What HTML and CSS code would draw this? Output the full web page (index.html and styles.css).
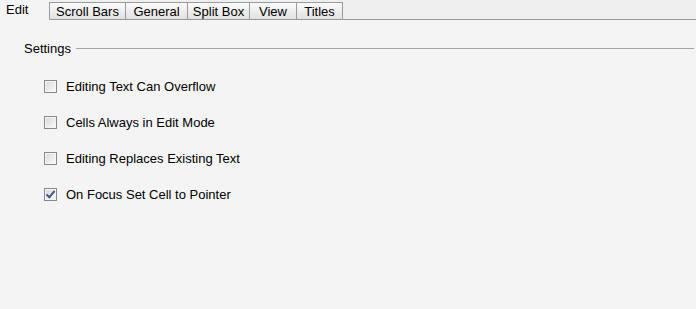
FILE: index.html
```html
<!DOCTYPE html>
<html lang="en">
<head>
    <meta charset="UTF-8">
    <title>Grid Properties</title>
    <link rel="stylesheet" href="styles.css">
</head>
<body>

    <!-- tab strip -->
    <nav class="tabs">
        <span class="tab active">Edit</span>
        <span class="tab w76">Scroll Bars</span>
        <span class="tab w62">General</span>
        <span class="tab w62">Split Box</span>
        <span class="tab w47">View</span>
        <span class="tab w47 last">Titles</span>
        <span class="tab-rest"></span>
    </nav>

    <main class="panel">
        <div class="group-title">
            <span>Settings</span>
            <span class="rule"></span>
        </div>

        <div class="options">
            <label class="option">
                <input type="checkbox">
                <span class="box"></span>
                Editing Text Can Overflow
            </label>
            <label class="option">
                <input type="checkbox">
                <span class="box"></span>
                Cells Always in Edit Mode
            </label>
            <label class="option">
                <input type="checkbox">
                <span class="box"></span>
                Editing Replaces Existing Text
            </label>
            <label class="option">
                <input type="checkbox" checked>
                <span class="box"></span>
                On Focus Set Cell to Pointer
            </label>
        </div>
    </main>

</body>
</html>
```

FILE: styles.css
```css
body {
    margin: 0;
    font-family: "Liberation Sans", Arial, sans-serif;
    font-size: 13px;
    color: #000;
    background-color: #f4f4f4;
    height: 309px;
    display: flex;
    flex-direction: column;
}

.tabs {
    display: flex;
    height: 20px;
    background-color: #efefef;
}

.tab {
    box-sizing: border-box;
    margin-top: 2px;
    height: 18px;
    padding-top: 1px;
    border: 1px solid #9a9a9a;
    border-right: none;
    background: linear-gradient(#fbfbfb, #e1e1e1);
    line-height: 15px;
    text-align: center;
    white-space: nowrap;
}

.w76 { width: 76px; }
.w62 { width: 62px; }
.w47 { width: 47px; }

.tab.last {
    border-right: 1px solid #9a9a9a;
}

.tab.active {
    width: 49px;
    margin-top: 0;
    height: 20px;
    padding: 2px 0 0 6px;
    border: none;
    background: #f4f4f4;
    text-align: left;
}

.tab-rest {
    flex: 1;
    border-bottom: 1px solid #9a9a9a;
}

.panel {
    flex: 1;
    margin-left: 2px;
    background-color: #f4f4f4;
    padding: 20px 2px 0 22px;
}

.group-title {
    display: flex;
    align-items: center;
    gap: 5px;
    height: 16px;
}

.group-title .rule {
    flex: 1;
    height: 1px;
    background-color: #a3a3a3;
    margin-top: 1px;
}

.options {
    display: flex;
    flex-direction: column;
    gap: 20px;
    padding: 22px 0 0 20px;
}

.option {
    display: flex;
    align-items: center;
    gap: 9px;
    height: 16px;
}

.option input {
    display: none;
}

.option .box {
    box-sizing: border-box;
    width: 13px;
    height: 13px;
    border: 1px solid #8a8a8a;
    background: linear-gradient(135deg, #d6d6d6, #fdfdfd);
    box-shadow: inset 0 0 0 1px #f4f4f4;
    position: relative;
}

.option input:checked + .box::after {
    content: '';
    position: absolute;
    left: 3px;
    top: 0px;
    width: 3px;
    height: 7px;
    border: solid #3f5a92;
    border-width: 0 2px 2px 0;
    transform: rotate(40deg);
}
```
